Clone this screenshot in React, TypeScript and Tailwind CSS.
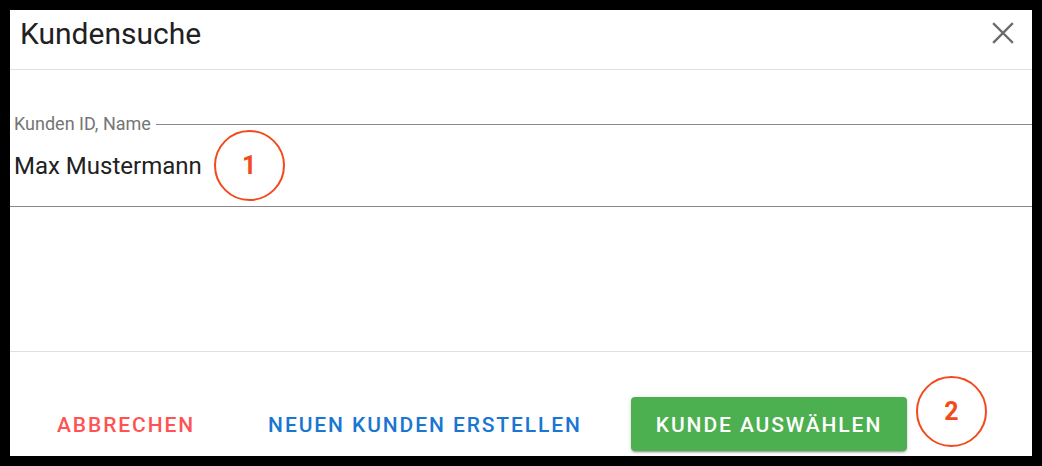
import React from "react";

export default function App() {
  return (
    <div className="w-[1042px] h-[466px] bg-black pt-[10px] pl-[10px] pr-[10px] pb-[10px]" style={{ fontFamily: "Roboto, 'Liberation Sans', sans-serif" }}>
      <div className="relative w-[1022px] h-[446px] bg-white flex flex-col">
        {/* Header */}
        <div className="h-[60px] flex items-center justify-between pl-[10px] pr-[18px] border-b border-[#e0e0e0] pb-[11px]">
          <span className="text-[30px] text-[#212121] leading-none">Kundensuche</span>
          <svg width="22" height="22" viewBox="0 0 22 22" className="-mt-[2px]">
            <path d="M2 2 L20 20 M20 2 L2 20" stroke="#6b6b6b" strokeWidth="2.4" strokeLinecap="square" />
          </svg>
        </div>
        {/* Content */}
        <div className="h-[281px] pt-[44px]">
          <div className="flex items-center h-[20px]">
            <span className="pl-[4px] pr-[5px] text-[18px] text-[#757575] leading-none">Kunden ID, Name</span>
            <div className="flex-1 h-px bg-[#8a8a8a]" />
          </div>
          <div className="pb-[9px] border-b border-[#8a8a8a]">
            <div className="h-[63px] flex items-center pl-[4px]">
              <span className="text-[24px] text-[#212121] leading-none">Max Mustermann</span>
              <div className="ml-[12px] w-[71px] h-[71px] rounded-full border-2 border-[#f24a1d] flex items-center justify-center shrink-0">
                <span className="text-[25px] font-bold text-[#f24a1d] leading-none">1</span>
              </div>
            </div>
          </div>
        </div>
        {/* Footer */}
        <div className="flex-1 border-t border-[#e0e0e0] flex items-end pb-[5px] pl-[32px]">
          <button className="w-[168px] h-[54px] pt-[3px] flex items-center justify-center text-[21px] font-medium tracking-[1.9px] text-[#ff5252]">
            ABBRECHEN
          </button>
          <button className="ml-[43px] w-[344px] h-[54px] pt-[3px] flex items-center justify-center text-[21px] font-medium tracking-[1.9px] text-[#1976d2]">
            NEUEN KUNDEN ERSTELLEN
          </button>
          <button className="ml-[34px] w-[276px] h-[54px] pt-[3px] rounded-[4px] bg-[#4caf50] flex items-center justify-center text-[21px] font-medium tracking-[1.9px] text-white shadow-[0_3px_1px_-2px_rgba(0,0,0,0.2),0_2px_2px_0_rgba(0,0,0,0.14),0_1px_5px_0_rgba(0,0,0,0.12)]">
            KUNDE AUSWÄHLEN
          </button>
        </div>
        <div className="absolute left-[906px] top-[366px] w-[71px] h-[71px] rounded-full border-2 border-[#f24a1d] flex items-center justify-center">
          <span className="text-[25px] font-bold text-[#f24a1d] leading-none">2</span>
        </div>
      </div>
    </div>
  );
}
